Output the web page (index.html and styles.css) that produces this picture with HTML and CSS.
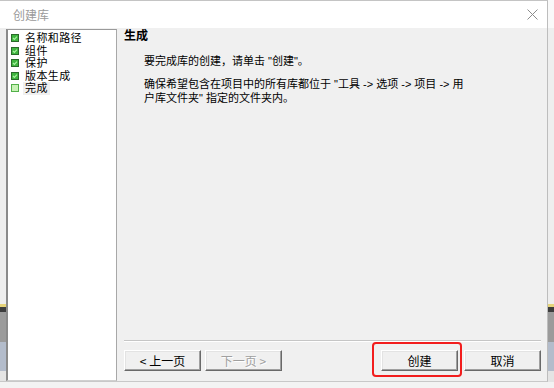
FILE: index.html
```html
<!DOCTYPE html>
<html lang="zh-CN">

<head>
    <meta charset="UTF-8">
    <title>创建库</title>
    <link rel="stylesheet" href="styles.css">
</head>

<body>
    <div class="window">
        <div class="titlebar">
            <span class="title">创建库</span>
            <svg class="close" width="11" height="11" viewBox="0 0 11 11">
                <path d="M0.5 0.5 L10.5 10.5 M10.5 0.5 L0.5 10.5" stroke="#8c8c8c" stroke-width="1" fill="none" />
            </svg>
        </div>

        <div class="content">
            <ul class="steps">
                <li>
                    <svg class="box" width="8" height="8" viewBox="0 0 8 8">
                        <rect x="0.5" y="0.5" width="7" height="7" fill="#3fb53f" stroke="#2a6a2a" />
                        <path d="M2 4 L3.4 5.4 L6 2.6" stroke="#a8f0a0" stroke-width="1.2" fill="none" />
                    </svg>
                    <span>名称和路径</span>
                </li>
                <li>
                    <svg class="box" width="8" height="8" viewBox="0 0 8 8">
                        <rect x="0.5" y="0.5" width="7" height="7" fill="#3fb53f" stroke="#2a6a2a" />
                        <path d="M2 4 L3.4 5.4 L6 2.6" stroke="#a8f0a0" stroke-width="1.2" fill="none" />
                    </svg>
                    <span>组件</span>
                </li>
                <li>
                    <svg class="box" width="8" height="8" viewBox="0 0 8 8">
                        <rect x="0.5" y="0.5" width="7" height="7" fill="#3fb53f" stroke="#2a6a2a" />
                        <path d="M2 4 L3.4 5.4 L6 2.6" stroke="#a8f0a0" stroke-width="1.2" fill="none" />
                    </svg>
                    <span>保护</span>
                </li>
                <li>
                    <svg class="box" width="8" height="8" viewBox="0 0 8 8">
                        <rect x="0.5" y="0.5" width="7" height="7" fill="#3fb53f" stroke="#2a6a2a" />
                        <path d="M2 4 L3.4 5.4 L6 2.6" stroke="#a8f0a0" stroke-width="1.2" fill="none" />
                    </svg>
                    <span>版本生成</span>
                </li>
                <li class="current">
                    <svg class="box" width="8" height="8" viewBox="0 0 8 8">
                        <rect x="0.5" y="0.5" width="7" height="7" fill="#c8f2b6" stroke="#52b04a" />
                    </svg>
                    <span>完成</span>
                </li>
            </ul>

            <div class="main">
                <h2>生成</h2>
                <p class="intro">要完成库的创建，请单击 "创建"。</p>
                <p>确保希望包含在项目中的所有库都位于 "工具 -&gt; 选项 -&gt; 项目 -&gt; 用<br>户库文件夹" 指定的文件夹内。</p>

                <div class="footer">
                    <div class="buttons">
                        <button class="btn">&lt; 上一页</button>
                        <button class="btn" disabled>下一页 &gt;</button>
                        <button class="btn btn-create marked">创建</button>
                        <button class="btn">取消</button>
                    </div>
                </div>
            </div>
        </div>
    </div>
</body>

</html>
```

FILE: styles.css
```css
:root {
    --face: #f0f0f0;
    --shadow: #a0a0a0;
    --dark-shadow: #696969;
    --text: #000;
    --disabled: #a0a0a0;
    --ui-font: 'Liberation Sans', 'Noto Sans CJK SC', sans-serif;
}

* {
    margin: 0;
    padding: 0;
    box-sizing: border-box;
    font-family: 'Noto Sans CJK SC', 'Noto Sans', sans-serif;
}

body {
    width: 554px;
    height: 388px;
    overflow: hidden;
    color: var(--text);
    /* what peeks out from behind the dialog */
    background: linear-gradient(to bottom,
            #f9f9f9 0 28px,
            #eeeeee 28px 304px,
            #e6d47a 304px 307px,
            #3d3d3d 307px 312px,
            #9b9b9b 312px 342px,
            #b3bccb 342px 371px,
            #e4e4e4 371px 382px,
            #f3f3f3 382px);
}

.window {
    width: 548px;
    height: 382px;
    border-top: 1px solid #c4c4c4;
    border-right: 1px solid #bdbdbd;
    border-bottom: 1px solid #c8c8c8;
    display: flex;
    flex-direction: column;
}

.titlebar {
    height: 27px;
    background: #fff;
    display: flex;
    align-items: center;
    justify-content: space-between;
    padding: 0 9px 0 13px;
}

.title {
    font-size: 12px;
    color: #9a9a9a;
}

.close {
    display: block;
    margin-top: -1px;
}

.content {
    flex: 1;
    display: flex;
    padding-left: 6px;
    background: linear-gradient(to right, transparent 6px, var(--face) 6px);
}

/* step list on the left */
.steps {
    list-style: none;
    width: 111px;
    margin-top: 1px;
    padding: 2px 0 0 3px;
    background: #fff;
    border-left: 2px solid #8a8a8a;
    border-top: 1px solid #9a9a9a;
    border-right: 1px solid #a8a8a8;
    border-bottom: 1px solid #d0d0d0;
}

.steps li {
    height: 12.5px;
    display: flex;
    align-items: center;
}

.steps .box {
    flex: none;
    margin-right: 4px;
}

.steps li span {
    display: block;
    height: 12.5px;
    font-family: var(--ui-font);
    font-size: 11px;
    line-height: 12.5px;
    letter-spacing: 0.4px;
    padding: 0 2px;
}

.steps li.current span {
    background: #f0f0f0;
}

/* main page */
.main {
    flex: 1;
    display: flex;
    flex-direction: column;
    padding: 0 6px 0 7px;
}

h2 {
    font-size: 12px;
    font-weight: 700;
    line-height: 14px;
}

.main p {
    font-family: var(--ui-font);
    font-size: 11px;
    line-height: 14px;
    padding-left: 20px;
    margin-top: 9px;
}

.main p.intro {
    margin-top: 12px;
}

.footer {
    margin-top: auto;
    border-top: 1px solid #c6c6c6;
    padding: 9px 0 10px;
    box-shadow: inset 0 1px 0 #fff;
}

.buttons {
    display: flex;
    gap: 4px;
}

.btn {
    width: 77px;
    height: 21px;
    font-size: 12px;
    background: var(--face);
    color: var(--text);
    border: 1px solid;
    border-color: #fff var(--dark-shadow) var(--dark-shadow) #fff;
    box-shadow: inset -1px -1px 0 var(--shadow), inset 1px 1px 0 #e3e3e3;
    cursor: pointer;
}

.btn:disabled {
    color: var(--disabled);
    text-shadow: 1px 1px 0 #fff;
    cursor: default;
}

.btn-create {
    margin-left: auto;
    margin-right: 2px;
}

/* red annotation drawn around the create button */
.marked {
    position: relative;
}

.marked::after {
    content: "";
    position: absolute;
    top: -9px;
    bottom: -7px;
    left: -10px;
    right: -5px;
    border: 2px solid #f21d1d;
    border-radius: 4px;
}
```
